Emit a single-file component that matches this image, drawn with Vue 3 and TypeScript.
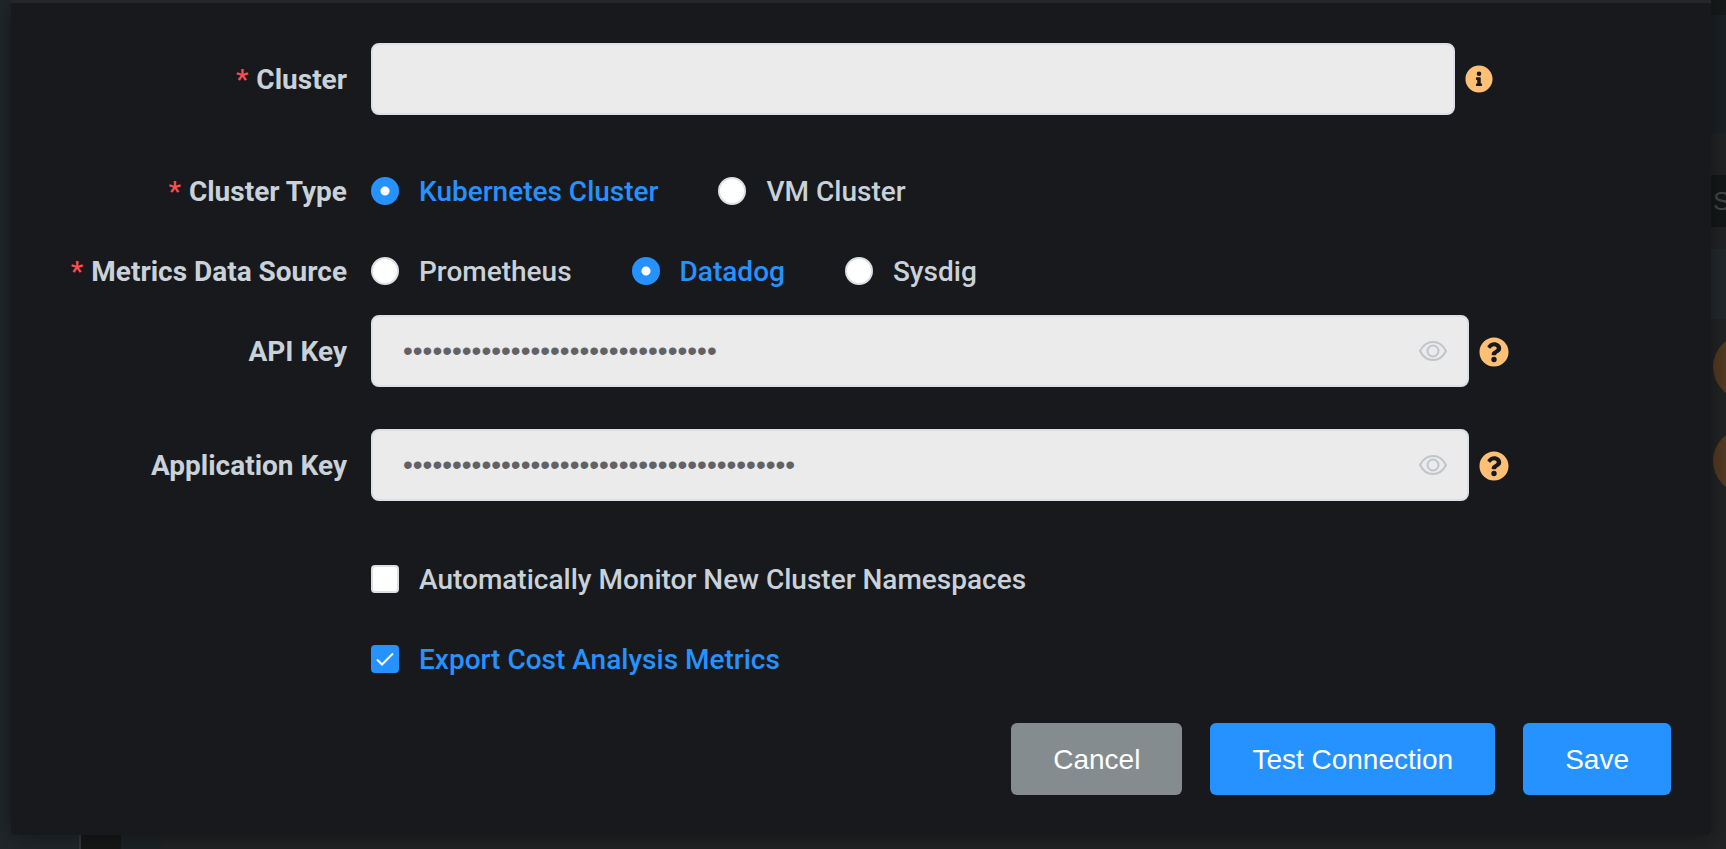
<script setup lang="ts">
import { ref } from 'vue'

interface Option {
  value: string
  label: string
}

const clusterTypes: Option[] = [
  { value: 'kubernetes', label: 'Kubernetes Cluster' },
  { value: 'vm', label: 'VM Cluster' },
]
const dataSources: Option[] = [
  { value: 'prometheus', label: 'Prometheus' },
  { value: 'datadog', label: 'Datadog' },
  { value: 'sysdig', label: 'Sysdig' },
]

const cluster = ref('')
const clusterType = ref('kubernetes')
const dataSource = ref('datadog')
const keys = ref([
  { id: 'api-key', label: 'API Key', value: 'x'.repeat(32), visible: false },
  { id: 'application-key', label: 'Application Key', value: 'x'.repeat(40), visible: false },
])
const autoMonitor = ref(false)
const exportCost = ref(true)
</script>

<template>
  <div class="page">
    <form class="dialog" @submit.prevent>
      <div class="fields">
        <div class="row row-cluster">
          <label class="label required" for="cluster">Cluster</label>
          <div class="control">
            <input id="cluster" v-model="cluster" class="text-input" type="text" />
            <button class="hint" type="button" aria-label="Cluster information">
              <svg class="info-icon" viewBox="0 0 512 512">
                <path
                  d="M256 8C119 8 8 119 8 256s111 248 248 248 248-111 248-248S393 8 256 8zm0 110a42 42 0 1 1 0 84 42 42 0 0 1 0-84zm56 254a12 12 0 0 1-12 12h-88a12 12 0 0 1-12-12v-24a12 12 0 0 1 12-12h12v-64h-12a12 12 0 0 1-12-12v-24a12 12 0 0 1 12-12h64a12 12 0 0 1 12 12v100h12a12 12 0 0 1 12 12z"
                />
              </svg>
            </button>
          </div>
        </div>

        <div class="row row-radio" role="radiogroup" aria-labelledby="type-label">
          <span id="type-label" class="label required">Cluster Type</span>
          <div class="options">
            <label v-for="o in clusterTypes" :key="o.value" class="option">
              <input v-model="clusterType" type="radio" name="cluster-type" :value="o.value" />
              <span>{{ o.label }}</span>
            </label>
          </div>
        </div>

        <div class="row row-radio" role="radiogroup" aria-labelledby="source-label">
          <span id="source-label" class="label required">Metrics Data Source</span>
          <div class="options">
            <label v-for="o in dataSources" :key="o.value" class="option">
              <input v-model="dataSource" type="radio" name="data-source" :value="o.value" />
              <span>{{ o.label }}</span>
            </label>
          </div>
        </div>

        <div v-for="k in keys" :key="k.id" class="row row-key">
          <label class="label" :for="k.id">{{ k.label }}</label>
          <div class="control">
            <div class="secret">
              <input
                :id="k.id"
                v-model="k.value"
                class="text-input"
                :type="k.visible ? 'text' : 'password'"
                autocomplete="off"
              />
              <button
                class="reveal"
                type="button"
                :aria-label="`Show ${k.label}`"
                @click="k.visible = !k.visible"
              >
                <svg viewBox="0 0 28 20">
                  <path d="M1 10C4 4 8.500 1 14 1s10 3 13 9c-3 6-7.500 9-13 9S4 16 1 10z" />
                  <circle cx="14" cy="10" r="5.500" />
                </svg>
              </button>
            </div>
            <button class="hint" type="button" :aria-label="`Help for ${k.label}`">
              <svg class="help-icon" viewBox="0 0 512 512">
                <path
                  d="M504 256c0 137-111 248-248 248S8 393 8 256 119 8 256 8s248 111 248 248zM262.700 90c-54.500 0-89.300 23-116.500 63.800a12 12 0 0 0 2.700 16l34.700 26.300a12 12 0 0 0 16.600-2.100c17.900-22.700 30.100-35.800 57.300-35.800 20.400 0 45.700 13.100 45.700 33 0 15-12.400 22.700-32.500 34C247.100 238.500 216 254.900 216 296v4a12 12 0 0 0 12 12h56a12 12 0 0 0 12-12v-1.300c0-28.500 83.200-29.600 83.200-106.700 0-58-60.200-102-116.500-102zM256 338a46 46 0 1 0 0 92 46 46 0 0 0 0-92z"
                />
              </svg>
            </button>
          </div>
        </div>

        <div class="checks">
          <label class="option">
            <input v-model="autoMonitor" type="checkbox" />
            <span>Automatically Monitor New Cluster Namespaces</span>
          </label>
          <label class="option">
            <input v-model="exportCost" type="checkbox" />
            <span>Export Cost Analysis Metrics</span>
          </label>
        </div>
      </div>

      <footer class="actions">
        <button class="btn btn-cancel" type="button">Cancel</button>
        <button class="btn" type="button">Test Connection</button>
        <button class="btn" type="submit">Save</button>
      </footer>
    </form>
    <div class="backdrop-right" aria-hidden="true">
      <div class="strip-head"></div>
      <div class="strip-search">S</div>
      <div class="strip-panel"></div>
      <div class="strip-dot"></div>
      <div class="strip-dot"></div>
    </div>
  </div>
</template>

<style>
body {
  margin: 0;
  background: #222324;
}
</style>

<style scoped>
.page {
  display: grid;
  grid-template-columns: minmax(0, 1fr) 15px;
  height: 100vh;
  overflow: hidden;
  background: linear-gradient(
    90deg,
    #20272a 0 79px,
    #35383a 79px 81px,
    #161818 81px 121px,
    #1d2326 121px 161px,
    #222324 161px
  );
  color: #c9d1d9;
  font-family: Roboto, 'Liberation Sans', sans-serif;
  font-size: 28px;
  line-height: 40px;
}

.backdrop-right {
  overflow: hidden;
}

.strip-head {
  height: 118px;
  margin-bottom: 42px;
  border-top: 15px solid #161a1a;
  background: #1b2124;
}

.strip-search {
  height: 52px;
  padding-left: 2px;
  background: #151818;
  color: #444648;
  font-family: 'Liberation Sans', sans-serif;
  font-size: 26px;
  line-height: 52px;
}

.strip-panel {
  height: 70px;
  margin: 22px 0 16px;
  background: #23292c;
}

.strip-dot {
  width: 64px;
  height: 64px;
  margin: 0 0 30px 2px;
  border-radius: 50%;
  background: #543b22;
}

.dialog {
  position: relative;
  align-self: start;
  margin-left: 11px;
  border-top: 3px solid #252628;
  border-radius: 0 0 4px 4px;
  background: #17191d;
  box-shadow: 0 2px 24px rgba(0, 0, 0, 0.4);
}

.fields {
  padding: 40px 202px 0 0;
}

.row {
  display: grid;
  grid-template-columns: 336px minmax(0, 1fr);
  column-gap: 24px;
  align-items: center;
}

.row-cluster {
  margin-bottom: 36px;
  padding-right: 16px;
}

.row-radio {
  min-height: 80px;
}

.row-key {
  margin: 4px 0 42px;
}

.row-key + .row-key {
  margin-top: 0;
}

.label {
  padding-top: 2px;
  font-weight: 700;
  text-align: right;
}

.required::before {
  content: '*';
  margin-right: 8px;
  color: #ff4d4f;
  font-weight: 500;
}

.control {
  display: flex;
  align-items: center;
  gap: 10px;
}

.secret {
  display: flex;
  position: relative;
  flex: 1;
}

.text-input {
  box-sizing: border-box;
  flex: 1;
  min-width: 0;
  height: 72px;
  padding: 0 30px;
  border: 2px solid #dcdfe6;
  border-radius: 8px;
  outline: none;
  background: #ebebeb;
  color: #606266;
  font-family: 'Liberation Sans', sans-serif;
  font-size: 28px;
}

.reveal,
.hint {
  display: flex;
  padding: 0;
  border: 0;
  background: none;
  cursor: pointer;
}

.reveal {
  position: absolute;
  top: 26px;
  right: 22px;
}

.reveal svg {
  width: 28px;
  height: 20px;
  fill: none;
  stroke: #c0c4cc;
  stroke-width: 2;
}

.hint svg {
  fill: #ffbf75;
}

.info-icon {
  width: 28px;
  height: 28px;
}

.help-icon {
  width: 30px;
  height: 30px;
  padding-top: 2px;
}

.options {
  display: flex;
  gap: 60px;
}

.option {
  display: flex;
  align-items: center;
  gap: 20px;
  font-weight: 500;
  cursor: pointer;
}

.option span {
  padding-top: 2px;
}

.option input {
  appearance: none;
  box-sizing: border-box;
  flex: none;
  width: 28px;
  height: 28px;
  margin: 0;
  border: 2px solid #dcdfe6;
  background: #fff;
}

.option input[type='radio'] {
  border-radius: 50%;
}

.option input[type='checkbox'] {
  border-radius: 4px;
}

.option input:checked {
  border-color: #2592ff;
  background: #2592ff;
}

.option input[type='radio']:checked {
  background: radial-gradient(circle, #fff 0 4px, #2592ff 5px);
}

.option input[type='checkbox']:checked {
  background: #2592ff
    url("data:image/svg+xml,%3Csvg xmlns='http://www.w3.org/2000/svg' viewBox='0 0 24 24'%3E%3Cpath d='M4 12.500l5 5L20 6.500' fill='none' stroke='white' stroke-width='2'/%3E%3C/svg%3E")
    center / 24px 24px no-repeat;
}

.option input:checked + span {
  color: #2592ff;
}

.checks {
  display: flex;
  flex-direction: column;
  align-items: flex-start;
  gap: 38px;
  padding: 15px 0 0 360px;
}

.actions {
  display: flex;
  justify-content: flex-end;
  gap: 28px;
  padding: 43px 40px 40px;
}

.btn {
  height: 72px;
  padding: 2px 42px 0;
  border: 0;
  border-radius: 6px;
  background: #2592ff;
  color: #fff;
  font-family: 'Liberation Sans', sans-serif;
  font-size: 28px;
  cursor: pointer;
}

.btn-cancel {
  background: #848c8f;
}
</style>
